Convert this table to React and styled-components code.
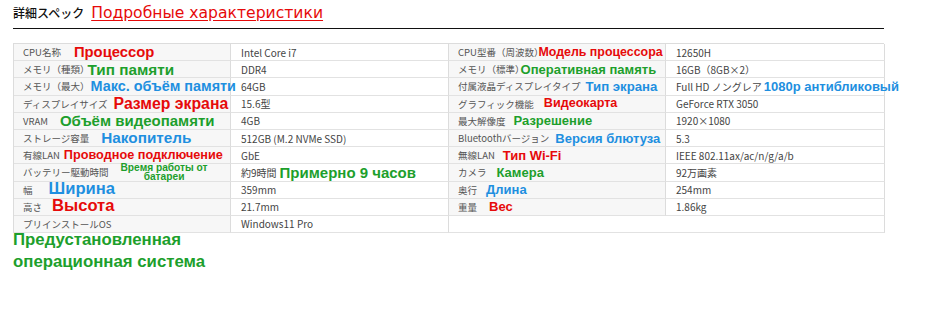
import React from "react";
import styled, { createGlobalStyle } from "styled-components";

const COLORS = {
  red: "#e60a0a",
  green: "#1d9f2c",
  blue: "#1e8fe0",
};

// note: [text, colour, font size, gap after the label]
const LEFT = [
  { label: "CPU名称", note: ["Процессор", "red", 14.8, 13], value: "Intel Core i7" },
  { label: "メモリ（種類）", note: ["Тип памяти", "green", 15.3, -2], value: "DDR4" },
  { label: "メモリ（最大）", note: ["Макс. объём памяти", "blue", 14.4, 1], value: "64GB" },
  { label: "ディスプレイサイズ", note: ["Размер экрана", "red", 15.8, 6], value: "15.6型" },
  { label: "VRAM", note: ["Объём видеопамяти", "green", 15, 12], value: "4GB" },
  { label: "ストレージ容量", note: ["Накопитель", "blue", 15.3, 12], value: "512GB (M.2 NVMe SSD)" },
  { label: "有線LAN", note: ["Проводное подключение", "red", 12.7, 4], value: "GbE" },
  {
    label: "バッテリー駆動時間",
    small: ["Время работы от", "батареи"],
    value: "約9時間",
    valueNote: ["Примерно 9 часов", "green", 15, 3],
  },
  { label: "幅", note: ["Ширина", "blue", 16.6, 16], value: "359mm" },
  { label: "高さ", note: ["Высота", "red", 16.6, 10], value: "21.7mm" },
  { label: "プリインストールOS", value: "Windows11 Pro" },
];

const RIGHT = [
  { label: "CPU型番（周波数）", note: ["Модель процессора", "red", 12.4, -5], value: "12650H" },
  { label: "メモリ（標準）", note: ["Оперативная память", "green", 13, -4], value: "16GB（8GB×2）" },
  {
    label: "付属液晶ディスプレイタイプ",
    note: ["Тип экрана", "blue", 13.2, 5],
    value: "Full HD ノングレア",
    valueNote: ["1080p антибликовый", "blue", 13, 2],
  },
  { label: "グラフィック機能", note: ["Видеокарта", "red", 12.6, 10], value: "GeForce RTX 3050" },
  { label: "最大解像度", note: ["Разрешение", "green", 13, 8], value: "1920×1080" },
  { label: "Bluetoothバージョン", note: ["Версия блютуза", "blue", 13, 6], value: "5.3" },
  { label: "無線LAN", note: ["Тип Wi-Fi", "red", 13, 8], value: "IEEE 802.11ax/ac/n/g/a/b" },
  { label: "カメラ", note: ["Камера", "green", 13, 10], value: "92万画素" },
  { label: "奥行", note: ["Длина", "blue", 13, 9], value: "254mm" },
  { label: "重量", note: ["Вес", "red", 13, 12], value: "1.86kg" },
  null,
];

const GlobalStyle = createGlobalStyle`
  body {
    margin: 0;
    background: #fff;
  }
`;

const Page = styled.div`
  width: 871px;
  margin-left: 13px;
  font-family: "Noto Sans CJK JP", "Noto Sans", sans-serif;
`;

const Header = styled.div`
  display: flex;
  align-items: baseline;
  gap: 7px;
  height: 29px;
  box-sizing: border-box;
  border-bottom: 1.5px solid #111;
  padding-top: 4px;
`;

const HeaderTitle = styled.span`
  font-size: 12px;
  font-weight: 500;
  color: #111;
`;

const HeaderNote = styled.span`
  font-family: "DejaVu Sans", "Noto Sans", sans-serif;
  font-size: 15.6px;
  color: ${COLORS.red};
  text-decoration: underline;
  text-underline-offset: 2px;
`;

const Table = styled.div`
  display: grid;
  grid-template-columns: 217px 218px 217px 219px;
  grid-auto-rows: 17.2px;
  margin-top: 14px;
  border-top: 1px solid #dcdcdc;
  border-left: 1px solid #dcdcdc;
`;

const Cell = styled.div`
  display: flex;
  align-items: center;
  box-sizing: border-box;
  padding-left: ${(p) => (p.$head ? "9px" : "10px")};
  border-right: 1px solid #dcdcdc;
  border-bottom: 1.5px solid #e2e2e2;
  background: ${(p) => (p.$head ? "#f7f7f7" : "#fff")};
  font-size: ${(p) => (p.$head ? "9.5px" : "10px")};
  color: ${(p) => (p.$head ? "#555" : "#444")};
  white-space: nowrap;
  grid-column: ${(p) => (p.$wide ? "span 2" : "auto")};
`;

const Note = styled.span`
  font-family: "Liberation Sans", "Noto Sans", sans-serif;
  font-weight: 700;
  font-size: ${(p) => p.$size}px;
  line-height: 1;
  color: ${(p) => COLORS[p.$tone]};
  margin-left: ${(p) => p.$ml}px;
  position: relative;
  z-index: 1;
`;

const SmallNote = styled.span`
  display: inline-flex;
  flex-direction: column;
  align-items: center;
  margin-left: 12px;
  font-family: "Liberation Sans", "Noto Sans", sans-serif;
  font-weight: 700;
  font-size: 10.2px;
  line-height: 9px;
  color: ${COLORS.green};
`;

const Footer = styled.div`
  width: 215px;
  margin-top: -4px;
  font-family: "Liberation Sans", "Noto Sans", sans-serif;
  font-weight: 700;
  font-size: 16.8px;
  line-height: 22px;
  color: ${COLORS.green};
`;

const NoteText = ({ note }) =>
  note ? (
    <Note $tone={note[1]} $size={note[2]} $ml={note[3]}>
      {note[0]}
    </Note>
  ) : null;

const SpecPair = ({ item }) => {
  if (!item) return <Cell $wide />;
  return (
    <>
      <Cell $head>
        {item.label}
        <NoteText note={item.note} />
        {item.small && (
          <SmallNote>
            {item.small.map((line) => (
              <span key={line}>{line}</span>
            ))}
          </SmallNote>
        )}
      </Cell>
      <Cell>
        {item.value}
        <NoteText note={item.valueNote} />
      </Cell>
    </>
  );
};

const App = () => {
  return (
    <Page>
      <GlobalStyle />
      <Header>
        <HeaderTitle>詳細スペック</HeaderTitle>
        <HeaderNote>Подробные характеристики</HeaderNote>
      </Header>
      <Table>
        {LEFT.map((item, i) => (
          <React.Fragment key={item.label}>
            <SpecPair item={item} />
            <SpecPair item={RIGHT[i]} />
          </React.Fragment>
        ))}
      </Table>
      <Footer>Предустановленная операционная система</Footer>
    </Page>
  );
};

export default App;
